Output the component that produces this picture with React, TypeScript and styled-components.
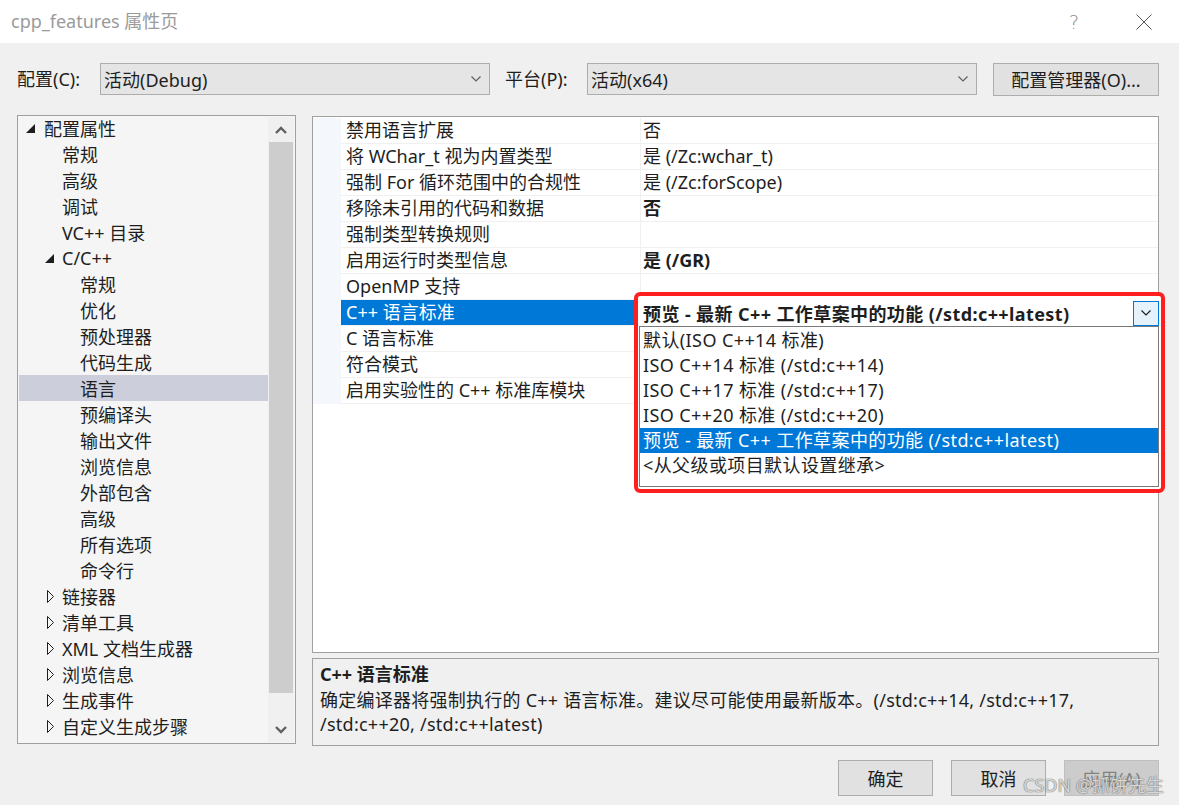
import React from "react"
import styled, { createGlobalStyle, css } from "styled-components"

const GlobalStyle = createGlobalStyle`
    html, body {
        margin: 0;
        padding: 0;
        background: #f0f0f0;
    }
    body {
        font-family: "Noto Sans", "Noto Sans CJK SC", sans-serif;
        font-size: 18px;
        color: #1e1e1e;
    }
    * {
        box-sizing: border-box;
    }
`

const Window = styled.div`
    position: relative;
    width: 1179px;
    height: 805px;
    background: #f0f0f0;
    overflow: hidden;
`

const TitleBar = styled.div`
    height: 43px;
    background: #ffffff;
    display: flex;
    align-items: center;
    padding-left: 11px;
`

const Title = styled.div`
    flex: 1 1 auto;
    color: #9a9a9a;
    font-size: 18px;
    line-height: 1;
    margin-top: -2px;
`

const TitleButton = styled.div`
    width: 70px;
    height: 43px;
    display: flex;
    align-items: center;
    justify-content: center;
    color: #8a8a8a;
    font-size: 19px;
    font-family: "DejaVu Sans", sans-serif;
    font-weight: 200;
`

const ConfigRow = styled.div`
    display: flex;
    align-items: center;
    padding: 20px 0 0 17px;
    height: 52px;
`

const FieldLabel = styled.div<{ $width: number; $indent?: number }>`
    width: ${p => p.$width}px;
    padding-left: ${p => p.$indent ?? 0}px;
    flex: none;
    line-height: 32px;
    white-space: nowrap;
`

const Combo = styled.div`
    width: 390px;
    height: 32px;
    flex: none;
    display: flex;
    align-items: center;
    padding: 0 8px 0 3px;
    background: #e5e5e5;
    border: 1px solid #adadad;
    span {
        flex: 1 1 auto;
    }
`

const Button = styled.div<{ $disabled?: boolean }>`
    height: 36px;
    display: flex;
    align-items: center;
    justify-content: center;
    background: #e1e1e1;
    border: 1px solid #adadad;
    white-space: nowrap;
    ${p => p.$disabled && css`
        background: #cccccc;
        border-color: #bfbfbf;
        color: #838383;
    `}
`

const ManagerButton = styled(Button)`
    width: 166px;
    height: 33px;
    margin-left: 16px;
`

const Main = styled.div`
    display: grid;
    grid-template-columns: 279px 847px;
    column-gap: 16px;
    padding: 20px 0 0 17px;
    align-items: start;
`

const Tree = styled.div`
    height: 629px;
    border: 1px solid #a0a0a0;
    background: #f5f5f5;
    display: flex;
    padding: 0 1px 1px 1px;
`

const TreeList = styled.div`
    flex: 1 1 auto;
    margin-top: -1px;
`

const TreeRow = styled.div<{ $level: number; $selected?: boolean }>`
    height: 26px;
    display: flex;
    align-items: center;
    padding-left: ${p => 7 + p.$level * 18}px;
    white-space: nowrap;
    background: ${p => (p.$selected ? "#cccedb" : "transparent")};
`

const Toggle = styled.div`
    width: 18px;
    height: 26px;
    flex: none;
    display: flex;
    align-items: center;
`

const ScrollBar = styled.div`
    width: 26px;
    flex: none;
    background: #f0f0f0;
    display: flex;
    flex-direction: column;
    margin-top: 1px;
`

const ScrollArrow = styled.div`
    height: 25px;
    flex: none;
    display: flex;
    align-items: center;
    justify-content: center;
`

const ScrollTrack = styled.div`
    flex: 1 1 auto;
    padding: 0 1px 0 1px;
    display: flex;
    flex-direction: column;
`

const ScrollThumb = styled.div`
    height: 551px;
    background: #cdcdcd;
`

const RightColumn = styled.div`
    display: flex;
    flex-direction: column;
    gap: 5px;
    margin-top: 1px;
`

const PropGrid = styled.div`
    position: relative;
    height: 537px;
    border: 1px solid #a0a0a0;
    background: #ffffff;
    padding-top: 1px;
`

const PropRow = styled.div<{ $selected?: boolean }>`
    display: grid;
    grid-template-columns: 28px 299px 1fr;
    height: 26px;
    ${p => p.$selected && css`
        ${NameCell} {
            background: #0078d7;
            color: #ffffff;
        }
    `}
`

const MarginCell = styled.div`
    background: #f4f7fc;
`

const NameCell = styled.div`
    padding-left: 5px;
    line-height: 25px;
    border-bottom: 1px solid #f0f0f0;
    white-space: nowrap;
`

const ValueCell = styled.div<{ $bold?: boolean }>`
    padding-left: 2px;
    line-height: 25px;
    border-left: 1px solid #f0f0f0;
    border-bottom: 1px solid #f0f0f0;
    white-space: nowrap;
    font-weight: ${p => (p.$bold ? 700 : 400)};
`

const Highlight = styled.div`
    position: absolute;
    left: 321px;
    top: 175px;
    width: 531px;
    height: 201px;
    border: 4px solid #ff1f1f;
    border-radius: 6px;
    background: #ffffff;
    padding: 4px 2px 0 1px;
    letter-spacing: 0.4px;
`

const ComboEdit = styled.div`
    height: 26px;
    display: flex;
    align-items: center;
    font-weight: 700;
    padding-left: 4px;
    span {
        flex: 1 1 auto;
        white-space: nowrap;
    }
`

const DropButton = styled.div`
    width: 26px;
    height: 25px;
    flex: none;
    border: 1px solid #0078d7;
    background: #e5f1fb;
    display: flex;
    align-items: center;
    justify-content: center;
`

const DropList = styled.div`
    height: 161px;
    border: 1px solid #7a7a7a;
    background: #ffffff;
    padding-top: 1px;
`

const DropItem = styled.div<{ $selected?: boolean }>`
    height: 25px;
    line-height: 25px;
    padding-left: 3px;
    white-space: nowrap;
    ${p => p.$selected && css`
        background: #0078d7;
        color: #ffffff;
    `}
`

const Description = styled.div`
    height: 88px;
    border: 1px solid #a0a0a0;
    background: #f0f0f0;
    padding: 3px 0 0 7px;
    line-height: 24.5px;
    letter-spacing: 0.25px;
`

const DescTitle = styled.div`
    font-weight: 700;
    margin-bottom: 1px;
    letter-spacing: 0;
`

const ButtonBar = styled.div`
    display: flex;
    justify-content: flex-end;
    gap: 18px;
    padding: 14px 20px 0 0;
    ${Button} {
        width: 95px;
    }
`

const Watermark = styled.div`
    position: absolute;
    right: 15px;
    bottom: 8px;
    font-size: 18px;
    color: rgba(235, 235, 235, 0.85);
    text-shadow: 0 0 1px #6a6a6a, 0 0 1px #6a6a6a;
    white-space: nowrap;
`

const Chevron = ({ color = "#606060" }: { color?: string }) => (
    <svg width="10" height="6" viewBox="0 0 10 6">
        <polyline points="0.5,0.5 5,5 9.5,0.5" fill="none" stroke={color} strokeWidth="1.2" />
    </svg>
)

const ArrowUp = () => (
    <svg width="12" height="8" viewBox="0 0 12 8">
        <polyline points="1,7 6,2 11,7" fill="none" stroke="#606060" strokeWidth="2.4" />
    </svg>
)

const ArrowDown = () => (
    <svg width="12" height="8" viewBox="0 0 12 8">
        <polyline points="1,1 6,6 11,1" fill="none" stroke="#606060" strokeWidth="2.4" />
    </svg>
)

const Expanded = ({ offset }: { offset: number }) => (
    <svg width="9" height="9" viewBox="0 0 9 9" style={{ marginLeft: offset }}>
        <polygon points="9,0 9,9 0,9" fill="#1e1e1e" />
    </svg>
)

const Collapsed = () => (
    <svg width="8" height="13" viewBox="0 0 8 13" style={{ marginLeft: 3 }}>
        <polygon points="0.5,0.5 6.5,6.5 0.5,12.5" fill="none" stroke="#1e1e1e" strokeWidth="1" />
    </svg>
)

type TreeItem = { label: string; level: number; toggle?: "open" | "closed"; selected?: boolean }

const treeItems: TreeItem[] = [
    { label: "配置属性", level: 0, toggle: "open" },
    { label: "常规", level: 1 },
    { label: "高级", level: 1 },
    { label: "调试", level: 1 },
    { label: "VC++ 目录", level: 1 },
    { label: "C/C++", level: 1, toggle: "open" },
    { label: "常规", level: 2 },
    { label: "优化", level: 2 },
    { label: "预处理器", level: 2 },
    { label: "代码生成", level: 2 },
    { label: "语言", level: 2, selected: true },
    { label: "预编译头", level: 2 },
    { label: "输出文件", level: 2 },
    { label: "浏览信息", level: 2 },
    { label: "外部包含", level: 2 },
    { label: "高级", level: 2 },
    { label: "所有选项", level: 2 },
    { label: "命令行", level: 2 },
    { label: "链接器", level: 1, toggle: "closed" },
    { label: "清单工具", level: 1, toggle: "closed" },
    { label: "XML 文档生成器", level: 1, toggle: "closed" },
    { label: "浏览信息", level: 1, toggle: "closed" },
    { label: "生成事件", level: 1, toggle: "closed" },
    { label: "自定义生成步骤", level: 1, toggle: "closed" },
]

type Prop = { name: string; value: string; bold?: boolean; selected?: boolean }

const props: Prop[] = [
    { name: "禁用语言扩展", value: "否" },
    { name: "将 WChar_t 视为内置类型", value: "是 (/Zc:wchar_t)" },
    { name: "强制 For 循环范围中的合规性", value: "是 (/Zc:forScope)" },
    { name: "移除未引用的代码和数据", value: "否", bold: true },
    { name: "强制类型转换规则", value: "" },
    { name: "启用运行时类型信息", value: "是 (/GR)", bold: true },
    { name: "OpenMP 支持", value: "" },
    { name: "C++ 语言标准", value: "", selected: true },
    { name: "C 语言标准", value: "" },
    { name: "符合模式", value: "" },
    { name: "启用实验性的 C++ 标准库模块", value: "" },
]

const options = [
    "默认(ISO C++14 标准)",
    "ISO C++14 标准 (/std:c++14)",
    "ISO C++17 标准 (/std:c++17)",
    "ISO C++20 标准 (/std:c++20)",
    "预览 - 最新 C++ 工作草案中的功能 (/std:c++latest)",
    "<从父级或项目默认设置继承>",
]

export default function App() {
    return (
        <Window>
            <GlobalStyle />
            <TitleBar>
                <Title>cpp_features 属性页</Title>
                <TitleButton>?</TitleButton>
                <TitleButton>
                    <svg width="16" height="16" viewBox="0 0 16 16">
                        <line x1="0.5" y1="0.5" x2="15.5" y2="15.5" stroke="#555" strokeWidth="1" />
                        <line x1="15.5" y1="0.5" x2="0.5" y2="15.5" stroke="#555" strokeWidth="1" />
                    </svg>
                </TitleButton>
            </TitleBar>

            <ConfigRow>
                <FieldLabel $width={83}>配置(C):</FieldLabel>
                <Combo><span>活动(Debug)</span><Chevron /></Combo>
                <FieldLabel $width={97} $indent={15}>平台(P):</FieldLabel>
                <Combo><span>活动(x64)</span><Chevron /></Combo>
                <ManagerButton>配置管理器(O)...</ManagerButton>
            </ConfigRow>

            <Main>
                <Tree>
                    <TreeList>
                        {treeItems.map((t, i) => (
                            <TreeRow key={i} $level={t.level} $selected={t.selected}>
                                <Toggle>
                                    {t.toggle === "open" && <Expanded offset={t.level === 0 ? 0 : 1} />}
                                    {t.toggle === "closed" && <Collapsed />}
                                </Toggle>
                                {t.label}
                            </TreeRow>
                        ))}
                    </TreeList>
                    <ScrollBar>
                        <ScrollArrow><ArrowUp /></ScrollArrow>
                        <ScrollTrack><ScrollThumb /></ScrollTrack>
                        <ScrollArrow><ArrowDown /></ScrollArrow>
                    </ScrollBar>
                </Tree>

                <RightColumn>
                    <PropGrid>
                        {props.map((p, i) => (
                            <PropRow key={i} $selected={p.selected}>
                                <MarginCell />
                                <NameCell>{p.name}</NameCell>
                                <ValueCell $bold={p.bold}>{p.value}</ValueCell>
                            </PropRow>
                        ))}
                        <Highlight>
                            <ComboEdit>
                                <span>预览 - 最新 C++ 工作草案中的功能 (/std:c++latest)</span>
                                <DropButton><Chevron color="#1e1e1e" /></DropButton>
                            </ComboEdit>
                            <DropList>
                                {options.map((o, i) => (
                                    <DropItem key={i} $selected={i === 4}>{o}</DropItem>
                                ))}
                            </DropList>
                        </Highlight>
                    </PropGrid>
                    <Description>
                        <DescTitle>C++ 语言标准</DescTitle>
                        确定编译器将强制执行的 C++ 语言标准。建议尽可能使用最新版本。(/std:c++14, /std:c++17,
                        <br />
                        /std:c++20, /std:c++latest)
                    </Description>
                </RightColumn>
            </Main>

            <ButtonBar>
                <Button>确定</Button>
                <Button>取消</Button>
                <Button $disabled>应用(A)</Button>
            </ButtonBar>

            <Watermark>CSDN @抓饼先生</Watermark>
        </Window>
    )
}
